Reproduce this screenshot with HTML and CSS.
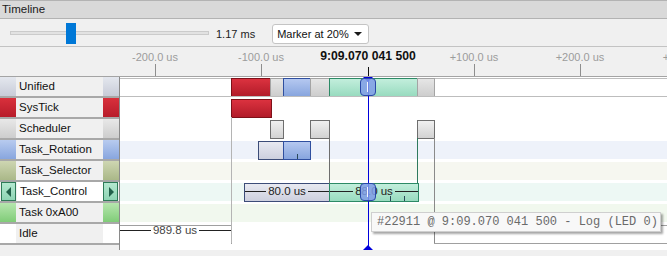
FILE: index.html
```html
<!DOCTYPE html>
<html lang="en">
<head>
  <meta charset="UTF-8" />
  <title>Timeline</title>
  <link rel="stylesheet" href="styles.css">
</head>
<body>
  <div class="panel">
    <div class="titlebar">Timeline</div>

    <div class="toolbar">
      <div class="slider">
        <div class="slider-track"></div>
        <div class="slider-thumb"></div>
      </div>
      <span class="zoom-value">1.17 ms</span>
      <div class="select">
        <span>Marker at 20%</span>
        <span class="caret"></span>
      </div>
    </div>

    <!-- ruler: 106px per 100 us, marker at 368px -->
    <div class="ruler">
      <div class="tick" style="left:155px"><span>-200.0 us</span></div>
      <div class="tick" style="left:261px"><span>-100.0 us</span></div>
      <div class="tick current" style="left:368px"><span>9:09.070 041 500</span></div>
      <div class="tick" style="left:474px"><span>+100.0 us</span></div>
      <div class="tick" style="left:580px"><span>+200.0 us</span></div>
      <div class="tick" style="left:687px"><span>+300.0 us</span></div>
    </div>

    <div class="tracks">
      <div class="labels">
        <div class="lane-label unified"><i class="swatch"></i><span class="name">Unified</span><i class="swatch"></i></div>
        <div class="lane-label systick"><i class="swatch"></i><span class="name">SysTick</span><i class="swatch"></i></div>
        <div class="lane-label scheduler"><i class="swatch"></i><span class="name">Scheduler</span><i class="swatch"></i></div>
        <div class="lane-label rotation"><i class="swatch"></i><span class="name">Task_Rotation</span><i class="swatch"></i></div>
        <div class="lane-label selector"><i class="swatch"></i><span class="name">Task_Selector</span><i class="swatch"></i></div>
        <div class="lane-label control selected"><i class="nav prev"></i><span class="name">Task_Control</span><i class="nav next"></i></div>
        <div class="lane-label a00"><i class="swatch"></i><span class="name">Task 0xA00</span><i class="swatch"></i></div>
        <div class="lane-label idle"><i class="swatch"></i><span class="name">Idle</span><i class="swatch"></i></div>
      </div>

      <div class="canvas">
        <div class="lane lane-unified">
          <div class="seg red" style="left:111px;width:40px"></div>
          <div class="seg gray" style="left:150px;width:14px"></div>
          <div class="seg blue" style="left:163px;width:28px"></div>
          <div class="seg gray" style="left:190px;width:20px"></div>
          <div class="seg green" style="left:209px;width:89px"></div>
          <div class="seg gray" style="left:297px;width:18px"></div>
          <div class="handle"></div>
        </div>
        <div class="lane">
          <div class="seg red" style="left:111px;width:41px"></div>
        </div>
        <div class="lane">
          <div class="seg sched" style="left:150px;width:14px"></div>
          <div class="seg sched" style="left:190px;width:20px"></div>
          <div class="seg sched" style="left:297px;width:18px"></div>
        </div>
        <div class="lane band band-rotation">
          <div class="seg ready" style="left:138px;width:26px"></div>
          <div class="seg blue" style="left:163px;width:28px"><i class="notch" style="left:13px"></i></div>
        </div>
        <div class="lane band band-selector"></div>
        <div class="lane band band-control">
          <div class="seg ready" style="left:124px;width:86px">
            <div class="dim"><span>80.0 us</span></div>
          </div>
          <div class="seg green" style="left:209px;width:90px">
            <div class="dim"><span>88.0 us</span></div>
            <i class="notch" style="left:60px"></i>
            <i class="notch" style="left:74px"></i>
          </div>
          <div class="handle"></div>
        </div>
        <div class="lane band band-a00"></div>
        <div class="lane">
          <div class="seg idle idle-left" style="left:-2px;width:114px">
            <div class="dim"><span>989.8 us</span></div>
          </div>
          <div class="seg idle idle-right" style="left:314px;width:300px"></div>
        </div>

        <!-- state transitions -->
        <i class="link" style="left:111px;top:40px;height:126px"></i>
        <i class="link dark" style="left:209px;top:61px;height:45px"></i>
        <i class="link teal" style="left:297px;top:61px;height:45px"></i>
        <i class="link mid" style="left:314px;top:61px;height:105px"></i>

        <div class="marker"></div>

        <div class="tooltip">#22911 @ 9:09.070 041 500 - Log (LED 0)</div>
      </div>
    </div>

    <div class="hscroll"></div>
  </div>
</body>
</html>
```

FILE: styles.css
```css
* {
  box-sizing: border-box;
}
body {
  margin: 0;
  font-family: "Liberation Sans", Arial, sans-serif;
  font-size: 11px;
  color: #1a1a1a;
  background: #f0f0f0;
}
.panel {
  width: 667px;
  height: 256px;
  overflow: hidden;
  display: flex;
  flex-direction: column;
}
.titlebar {
  height: 19px;
  line-height: 17px;
  padding-left: 2px;
  font-size: 11.5px;
  background: #d9d9d9;
  border-top: 1px solid #b3b3b3;
  border-bottom: 1px solid #b3b3b3;
  color: #202020;
}

/* toolbar */
.toolbar {
  height: 28px;
  flex: none;
  display: flex;
  align-items: center;
  padding-top: 2px;
  background: #f0f0f0;
  border-bottom: 1px solid #c3c3c3;
}
.slider {
  position: relative;
  width: 199px;
  height: 21px;
  margin-left: 10px;
}
.slider-track {
  position: absolute;
  left: 0;
  right: 0;
  top: 8px;
  height: 4px;
  background: #e2e2e2;
  border: 1px solid #cbcbcb;
}
.slider-thumb {
  position: absolute;
  left: 56px;
  top: 0;
  width: 10px;
  height: 21px;
  background: #0078d7;
}
.zoom-value {
  margin-left: 7px;
  color: #222;
}
.select {
  margin-left: 17px;
  width: 97px;
  height: 20px;
  display: flex;
  align-items: center;
  justify-content: space-between;
  padding: 0 6px 0 4px;
  background: #fff;
  border: 1px solid #c4c4c4;
  border-radius: 3px;
  color: #111;
}
.caret {
  width: 0;
  height: 0;
  border-left: 4px solid transparent;
  border-right: 4px solid transparent;
  border-top: 4px solid #1a1a1a;
}

/* ruler */
.ruler {
  position: relative;
  height: 29px;
  flex: none;
  background: #f0f0f0;
}
.tick {
  position: absolute;
  top: 0;
  bottom: 0;
  width: 1px;
}
.tick::after {
  content: "";
  position: absolute;
  left: 0;
  top: 17px;
  bottom: 0;
  width: 1px;
  background: #8e8e8e;
}
.tick span {
  position: absolute;
  top: 4px;
  left: 0;
  transform: translateX(-50%);
  white-space: nowrap;
  line-height: 13px;
  color: #9c9c9c;
}
.tick.current span {
  top: 3px;
  font-size: 12.2px;
  font-weight: bold;
  color: #111;
}
.tick.current::after {
  top: 20px;
  background: #111;
}

/* lanes */
.tracks {
  flex: 1;
  display: flex;
  min-height: 0;
  border-top: 1px solid #a4a4a4;
}
.labels {
  width: 120px;
  flex: none;
  background: #f0f0f0;
  border-right: 1px solid #8a8a8a;
}
.lane-label {
  display: flex;
  height: 21px;
  border-bottom: 2px solid #a8a8a8;
}
.swatch {
  width: 16px;
  flex: none;
}
.name {
  flex: 1;
  padding-left: 3px;
  line-height: 19px;
  font-size: 11.5px;
  color: #111;
}
.unified .swatch { background: linear-gradient(#e4e7ee, #c8ccd8); }
.systick .swatch { background: linear-gradient(#d9303c, #b71c2a); }
.scheduler .swatch { background: linear-gradient(#e8e8e8, #cdcdcd); }
.rotation .swatch { background: linear-gradient(#b8cbef, #88a6de); }
.selector .swatch { background: linear-gradient(#ced6b2, #aab888); }
.a00 .swatch { background: linear-gradient(#b6e6ae, #80cc78); }
.idle .swatch { background: #fff; }
.selected .name {
  background: #fff;
}
.nav {
  position: relative;
  width: 15px;
  flex: none;
  margin: 0 1px 0 1px;
  background: linear-gradient(#b4e8d0, #8ed4b4);
  border: 1px solid #2e7a58;
}
.nav.next {
  margin: 0 1px 0 0;
}
.nav::after {
  content: "";
  position: absolute;
  top: 4px;
  border-top: 5px solid transparent;
  border-bottom: 5px solid transparent;
}
.nav.prev::after {
  left: 4px;
  border-right: 5px solid #22604a;
}
.nav.next::after {
  left: 5px;
  border-left: 5px solid #22604a;
}

.canvas {
  flex: 1;
  position: relative;
  overflow: hidden;
  background: #fff;
}
.lane {
  position: relative;
  height: 21px;
}
.lane-unified::before,
.lane-unified::after {
  content: "";
  position: absolute;
  left: 0;
  right: 0;
  height: 1px;
  background: #bdbdbd;
}
.lane-unified::before { top: 1px; }
.lane-unified::after { top: 19px; }
.band::before {
  content: "";
  position: absolute;
  left: 0;
  right: 0;
  top: 1px;
  height: 18px;
}
.band-rotation::before { background: #eef2fa; }
.band-selector::before { background: #f6f7f0; }
.band-control::before { background: #edf8f4; }
.band-a00::before { background: #f1f8ee; }

.seg {
  position: absolute;
  top: 1px;
  height: 19px;
  border: 1px solid;
}
.seg.red { background: linear-gradient(#db323f, #b21b29); border-color: #7e1119; }
.seg.gray { background: linear-gradient(#e6e6e6, #cdcdcd); border-color: #a4a4a4; }
.seg.blue { background: linear-gradient(#b5c8f0, #87a5de); border-color: #2f4f9f; }
.seg.green { background: linear-gradient(#c2eedc, #98dbbf); border-color: #2d8a66; }
.seg.sched { background: linear-gradient(#f0f0f0, #d2d2d2); border-color: #6e6e6e; }
.seg.ready { background: linear-gradient(#e8e9f1, #cdd0de); border-color: #3c4c78; }
.seg.idle { background: #fff; border-color: #a0a0a0; }
.idle-left { border-bottom: none; }
.idle-right { border-top-color: #333; }

.notch {
  position: absolute;
  bottom: 0;
  width: 1px;
  height: 5px;
  background: #2a4a5a;
}
.dim {
  position: absolute;
  left: 0;
  right: 0;
  top: 1px;
  height: 13px;
  display: flex;
  align-items: center;
}
.idle .dim {
  top: -2px;
}
.dim::before,
.dim::after {
  content: "";
  flex: 1;
  height: 1px;
  background: #222;
}
.dim span {
  padding: 0 2px;
  line-height: 13px;
  font-size: 11.5px;
  color: #222;
}
.idle .dim span {
  color: #444;
}

.link {
  position: absolute;
  width: 1px;
  background: #b4b4b4;
}
.link.dark { background: #6e6e6e; }
.link.teal { background: #2e7a5e; }
.link.mid { background: #8a8a8a; }

.marker {
  position: absolute;
  left: 248px;
  top: 0;
  bottom: 0;
  width: 1px;
  background: #0000dc;
  z-index: 2;
}
.marker::before,
.marker::after {
  content: "";
  position: absolute;
  left: -5px;
  border-left: 5.5px solid transparent;
  border-right: 5.5px solid transparent;
}
.marker::before {
  top: 0;
  border-top: 5px solid #0000dc;
}
.marker::after {
  bottom: 0;
  border-bottom: 5px solid #0000dc;
}
.handle {
  position: absolute;
  left: 240px;
  top: 1px;
  width: 16px;
  height: 18px;
  border: 1px solid #2a48a8;
  border-radius: 4px;
  background: rgba(128, 156, 232, 0.85);
  z-index: 3;
}
.handle::after {
  content: "";
  position: absolute;
  left: 6px;
  top: 3px;
  bottom: 3px;
  width: 1px;
  background: #f4f6ff;
}

.tooltip {
  position: absolute;
  left: 251px;
  top: 135px;
  width: 290px;
  height: 20px;
  padding: 0 5px;
  line-height: 18px;
  font-family: "Liberation Mono", "Courier New", monospace;
  font-size: 12px;
  color: #6a6a6a;
  white-space: nowrap;
  background: #f8f8f8;
  border: 1px solid #cfcfcf;
  box-shadow: 2px 2px 2px rgba(0, 0, 0, 0.35);
  z-index: 4;
}

.hscroll {
  height: 6px;
  flex: none;
  background: #f0f0f0;
}
```
